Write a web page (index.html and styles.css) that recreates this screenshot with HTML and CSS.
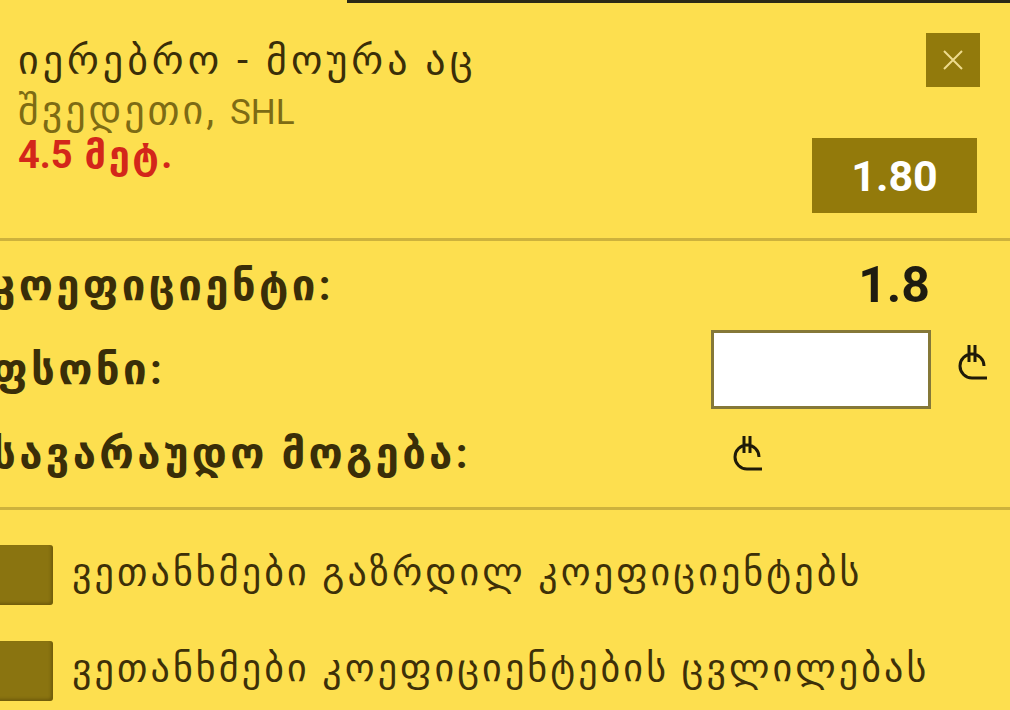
FILE: index.html
```html
<!DOCTYPE html>
<html lang="ka">
<head>
    <meta charset="UTF-8">
    <meta name="viewport" content="width=device-width, initial-scale=1.0">
    <title>ბილეთი</title>
    <link rel="stylesheet" href="styles.css">
</head>
<body>
    <div class="topbar"></div>

    <!-- event -->
    <div class="event">
        <div class="event-info">
            <div class="event-name">იერებრო - მოურა აც</div>
            <div class="event-league">შვედეთი, <span class="lat">SHL</span></div>
            <div class="event-pick"><span class="lat">4.5</span> მეტ.</div>
        </div>
        <div class="event-side">
            <button class="close-btn" aria-label="close">
                <svg width="22" height="22" viewBox="0 0 22 22">
                    <path d="M2 2 L20 20 M20 2 L2 20" stroke="#eedb8e" stroke-width="2" fill="none"/>
                </svg>
            </button>
            <div class="odd-btn">1.80</div>
        </div>
    </div>

    <!-- summary -->
    <div class="summary">
        <div class="row">
            <div class="label">კოეფიციენტი:</div>
            <div class="value value-odd">1.8</div>
            <div class="extra"></div>
        </div>
        <div class="row">
            <div class="label">ფსონი:</div>
            <div class="value"><input type="text" class="stake"></div>
            <div class="extra">
                <span class="lari lari-after">
                    <svg width="34" height="38" viewBox="0 0 34 38"><path d="M29 23 A12 12 0 1 0 17 35 L32 35 M14 2 V19 M20 2 V19" stroke="#1f1a08" stroke-width="3" fill="none"/></svg>
                </span>
            </div>
        </div>
        <div class="row">
            <div class="label">სავარაუდო მოგება:</div>
            <div class="value value-win">
                <span class="lari">
                    <svg width="34" height="38" viewBox="0 0 34 38"><path d="M29 23 A12 12 0 1 0 17 35 L32 35 M14 2 V19 M20 2 V19" stroke="#1f1a08" stroke-width="3" fill="none"/></svg>
                </span>
            </div>
            <div class="extra"></div>
        </div>
    </div>

    <!-- agreements -->
    <div class="agree">
        <label class="agree-item">
            <span class="box"></span>
            <span class="agree-text">ვეთანხმები გაზრდილ კოეფიციენტებს</span>
        </label>
        <label class="agree-item">
            <span class="box"></span>
            <span class="agree-text">ვეთანხმები კოეფიციენტების ცვლილებას</span>
        </label>
    </div>
</body>
</html>
```

FILE: styles.css
```css
* {
    margin: 0;
    padding: 0;
    box-sizing: border-box;
}

body, html {
    width: 100%;
    height: 100%;
    background: #fddf4f;
    font-family: Roboto, "DejaVu Sans", sans-serif;
    color: #3a2e08;
    overflow: hidden;
}

.lat {
    letter-spacing: 0;
}

.topbar {
    height: 3px;
    margin-left: 347px;
    background: #2b2916;
}

/* event */
.event {
    display: flex;
    justify-content: space-between;
    padding: 30px 30px 25px 18px;
    border-bottom: 3px solid #cdb23c;
}

.event-info {
    padding-top: 5px;
    line-height: 46px;
    white-space: nowrap;
}

.event-name {
    font-size: 40px;
    letter-spacing: 4px;
    color: #3a2e08;
}

.event-league {
    padding-top: 4px;
    font-size: 40px;
    letter-spacing: 3px;
    color: #7d6b14;
}

.event-league .lat {
    font-size: 35px;
}

.event-pick {
    margin-top: -4px;
    font-size: 38px;
    letter-spacing: 2.5px;
    font-weight: bold;
    color: #d3261a;
}

.event-side {
    display: flex;
    flex-direction: column;
    align-items: flex-end;
    gap: 51px;
}

.close-btn {
    width: 54px;
    height: 54px;
    border: none;
    background: #927a0c;
    display: flex;
    align-items: center;
    justify-content: center;
}

.odd-btn {
    width: 165px;
    height: 75px;
    margin-right: 3px;
    background: #937a0b;
    color: #fff;
    font-size: 43px;
    font-weight: bold;
    display: flex;
    align-items: center;
    justify-content: center;
}

/* summary */
.summary {
    margin-left: -8px;
    padding: 2px 0 12px;
    border-bottom: 3px solid #cdb23c;
}

.row {
    display: grid;
    grid-template-columns: 1fr 220px 79px;
    align-items: center;
    height: 84px;
}

.label {
    font-size: 42px;
    letter-spacing: 3.3px;
    font-weight: bold;
    color: #3a2e08;
    white-space: nowrap;
}

.value-odd {
    text-align: right;
    padding-right: 1px;
    font-size: 50px;
    font-weight: bold;
    color: #1f1c10;
}

.stake {
    display: block;
    width: 220px;
    height: 79px;
    border: 3px solid #857838;
    background: #fff;
    outline: none;
}

.extra {
    padding-left: 24px;
}

.lari-after {
    display: block;
    margin-top: -14px;
}

.value-win {
    padding-left: 19px;
}

.lari svg {
    display: block;
}

/* agreements */
.agree {
    margin-left: -7px;
    padding-top: 35px;
    display: flex;
    flex-direction: column;
    gap: 36px;
}

.agree-item {
    display: flex;
    align-items: center;
    gap: 19px;
    white-space: nowrap;
}

.agree-text {
    padding-bottom: 7px;
    font-size: 38px;
    letter-spacing: 3.1px;
    color: #3d3008;
}

.box {
    flex: none;
    width: 60px;
    height: 60px;
    border-radius: 3px;
    background: #8a7410;
    box-shadow: inset -2px -2px 3px rgba(60, 45, 0, 0.35);
}
```
